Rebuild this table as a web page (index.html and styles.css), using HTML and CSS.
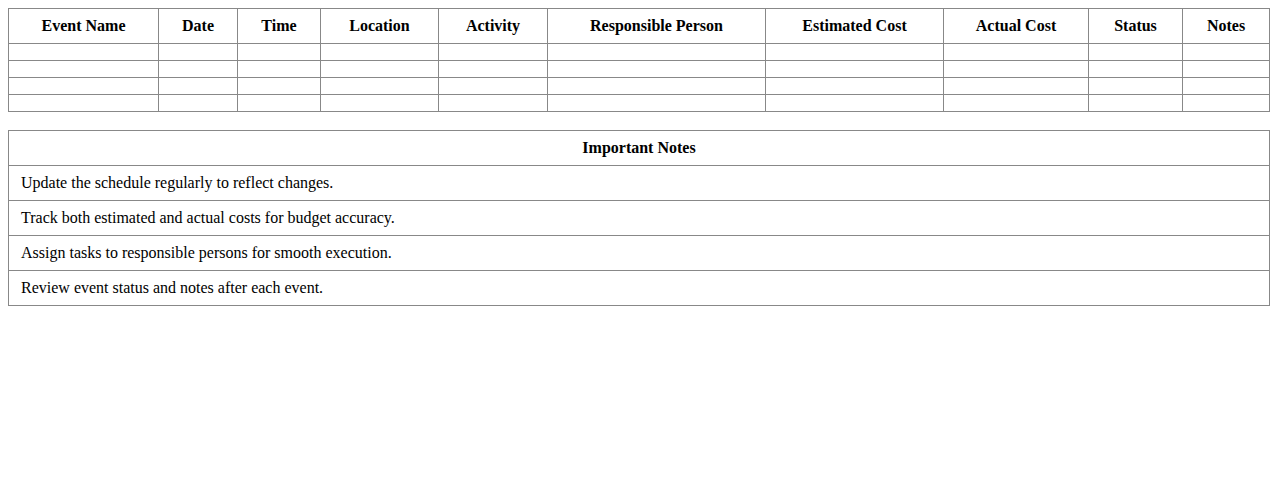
FILE: index.html
```html
<!DOCTYPE html>
<html>
<head>
<meta charset="utf-8">
<link rel="stylesheet" href="styles.css">
</head>
<body>
<table class="schedule">
  <colgroup>
    <col class="c-name"><col class="c-date"><col class="c-time"><col class="c-loc"><col class="c-act"><col class="c-resp"><col class="c-est"><col class="c-act-cost"><col class="c-status"><col class="c-notes">
  </colgroup>
  <thead>
    <tr>
      <th>Event Name</th><th>Date</th><th>Time</th><th>Location</th><th>Activity</th><th>Responsible Person</th><th>Estimated Cost</th><th>Actual Cost</th><th>Status</th><th>Notes</th>
    </tr>
  </thead>
  <tbody>
    <tr><td></td><td></td><td></td><td></td><td></td><td></td><td></td><td></td><td></td><td></td></tr>
    <tr><td></td><td></td><td></td><td></td><td></td><td></td><td></td><td></td><td></td><td></td></tr>
    <tr><td></td><td></td><td></td><td></td><td></td><td></td><td></td><td></td><td></td><td></td></tr>
    <tr><td></td><td></td><td></td><td></td><td></td><td></td><td></td><td></td><td></td><td></td></tr>
  </tbody>
</table>
<table class="notes">
  <thead>
    <tr><th>Important Notes</th></tr>
  </thead>
  <tbody>
    <tr><td>Update the schedule regularly to reflect changes.</td></tr>
    <tr><td>Track both estimated and actual costs for budget accuracy.</td></tr>
    <tr><td>Assign tasks to responsible persons for smooth execution.</td></tr>
    <tr><td>Review event status and notes after each event.</td></tr>
  </tbody>
</table>
</body>
</html>
```
FILE: styles.css
```css
body {
  margin: 8px;
  font-family: "Liberation Serif", "Times New Roman", serif;
  font-size: 16px;
  color: #000;
  background: #fff;
}
table {
  width: 100%;
  border-collapse: collapse;
}
th, td {
  border: 1px solid #888;
  padding: 8px;
}
th {
  font-weight: bold;
  text-align: center;
}
.schedule {
  table-layout: fixed;
}
.c-name { width: 150px; }
.c-date { width: 79px; }
.c-time { width: 83px; }
.c-loc { width: 118px; }
.c-act { width: 109px; }
.c-resp { width: 218px; }
.c-est { width: 178px; }
.c-act-cost { width: 145px; }
.c-status { width: 94px; }
.c-notes { width: 87px; }
.notes {
  margin-top: 18px;
}
.notes td {
  padding: 8px 12px;
  text-align: left;
}
```
